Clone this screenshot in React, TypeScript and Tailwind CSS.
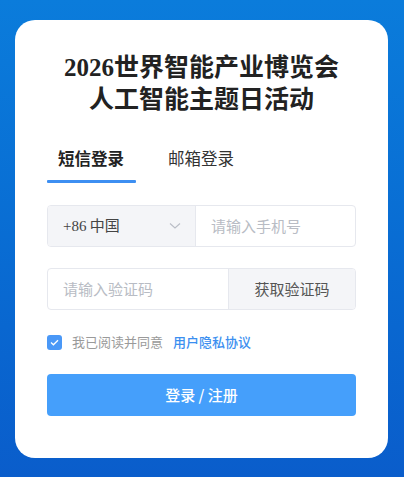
import { useState } from 'react';

const cjk = '"Noto Sans CJK SC", "Noto Sans", sans-serif';

export default function App() {
  const [tab, setTab] = useState<'sms' | 'mail'>('sms');
  const [agreed, setAgreed] = useState(true);

  return (
    <div
      className="w-[404px] h-[477px] bg-gradient-to-b from-[#0b7cdb] to-[#0a5dcb] pt-[20px] px-[15px] overflow-hidden"
      style={{ fontFamily: cjk }}
    >
      <div className="w-[373px] h-[438px] bg-white rounded-[20px] px-[32px] pt-[32px]">
        <h1
          className="text-center text-[25px] leading-[32px] font-bold text-[#222]"
          style={{ fontFamily: '"Liberation Serif", "Noto Sans CJK SC", serif' }}
        >
          2026世界智能产业博览会
          <br />
          人工智能主题日活动
        </h1>

        <div className="mt-[30px] flex">
          <button
            onClick={() => setTab('sms')}
            className="flex flex-col items-start w-[89px]"
          >
            <span
              className={
                'pl-[11px] text-[16.5px] leading-[24px] ' +
                (tab === 'sms' ? 'font-bold text-[#222]' : 'text-[#333]')
              }
            >
              短信登录
            </span>
            <span
              className={
                'mt-[10px] h-[3px] w-[89px] rounded-[1px] ' +
                (tab === 'sms' ? 'bg-[#3d8ff2]' : 'bg-transparent')
              }
            />
          </button>
          <button
            onClick={() => setTab('mail')}
            className="flex flex-col items-start ml-[32px]"
          >
            <span
              className={
                'text-[16.5px] leading-[24px] ' +
                (tab === 'mail' ? 'font-bold text-[#222]' : 'text-[#333]')
              }
            >
              邮箱登录
            </span>
          </button>
        </div>

        <div className="mt-[22px] flex h-[42px] border border-[#e6e8ee] rounded-[4px] overflow-hidden">
          <div className="w-[148px] bg-[#f4f5f8] border-r border-[#e6e8ee] flex items-center pl-[15px] pr-[14px]">
            <span className="text-[15px] text-[#444] flex-1">
              <span style={{ fontFamily: '"Liberation Serif", serif' }}>+86</span> 中国
            </span>
            <svg width="12" height="8" viewBox="0 0 12 8" fill="none">
              <path d="M1 1.5 L6 6 L11 1.5" stroke="#b9bdc6" strokeWidth="1.1" />
            </svg>
          </div>
          <input
            className="flex-1 min-w-0 px-[15px] text-[15px] text-[#333] outline-none placeholder:text-[#b8bcc4]"
            placeholder="请输入手机号"
            style={{ fontFamily: cjk }}
          />
        </div>

        <div className="mt-[21px] flex h-[42px] border border-[#e6e8ee] rounded-[4px] overflow-hidden">
          <input
            className="w-[181px] px-[15px] text-[15px] text-[#333] outline-none placeholder:text-[#b8bcc4] border-r border-[#e6e8ee]"
            placeholder="请输入验证码"
            style={{ fontFamily: cjk }}
          />
          <button className="flex-1 bg-[#f4f5f8] text-[15px] text-[#555]">获取验证码</button>
        </div>

        <div className="mt-[25px] flex items-center h-[14px] text-[13px]">
          <button
            onClick={() => setAgreed(!agreed)}
            className={
              'w-[15px] h-[15px] rounded-[3px] flex items-center justify-center ' +
              (agreed ? 'bg-[#4a98f7]' : 'border border-[#ccc] bg-white')
            }
          >
            {agreed && (
              <svg width="9" height="7" viewBox="0 0 9 7" fill="none">
                <path d="M1 3.6 L3.4 5.8 L8 1.2" stroke="white" strokeWidth="1.3" />
              </svg>
            )}
          </button>
          <span className="ml-[10px] text-[#9a9a9a]">我已阅读并同意</span>
          <span className="ml-[10px] text-[#3b8ff0] font-medium">用户隐私协议</span>
        </div>

        <button className="mt-[25px] w-full h-[42px] rounded-[4px] bg-[#459ffb] text-white text-[15px] font-medium">
          登录 / 注册
        </button>
      </div>
    </div>
  );
}
